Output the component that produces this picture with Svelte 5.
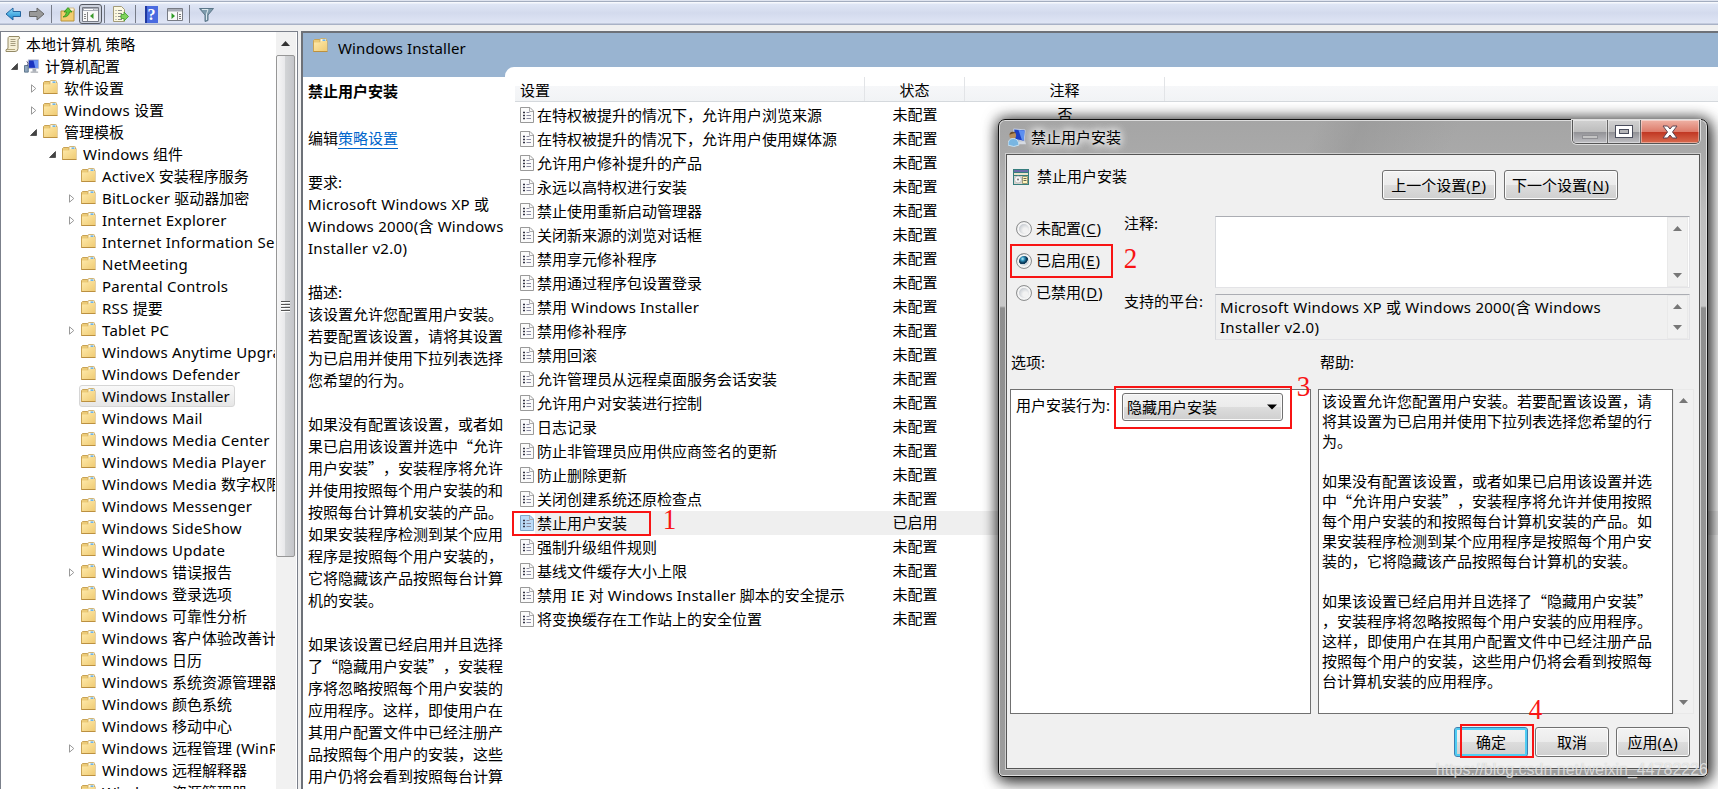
<script>
  const tree = [
    { depth: 0, label: '本地计算机 策略', icon: 'scroll' },
    { depth: 1, label: '计算机配置', icon: 'computer', open: true },
    { depth: 2, label: '软件设置', closed: true },
    { depth: 2, label: 'Windows 设置', closed: true },
    { depth: 2, label: '管理模板', open: true },
    { depth: 3, label: 'Windows 组件', open: true },
    { depth: 4, label: 'ActiveX 安装程序服务' },
    { depth: 4, label: 'BitLocker 驱动器加密', closed: true },
    { depth: 4, label: 'Internet Explorer', closed: true },
    { depth: 4, label: 'Internet Information Services' },
    { depth: 4, label: 'NetMeeting' },
    { depth: 4, label: 'Parental Controls' },
    { depth: 4, label: 'RSS 提要' },
    { depth: 4, label: 'Tablet PC', closed: true },
    { depth: 4, label: 'Windows Anytime Upgrade' },
    { depth: 4, label: 'Windows Defender' },
    { depth: 4, label: 'Windows Installer', selected: true },
    { depth: 4, label: 'Windows Mail' },
    { depth: 4, label: 'Windows Media Center' },
    { depth: 4, label: 'Windows Media Player' },
    { depth: 4, label: 'Windows Media 数字权限管理' },
    { depth: 4, label: 'Windows Messenger' },
    { depth: 4, label: 'Windows SideShow' },
    { depth: 4, label: 'Windows Update' },
    { depth: 4, label: 'Windows 错误报告', closed: true },
    { depth: 4, label: 'Windows 登录选项' },
    { depth: 4, label: 'Windows 可靠性分析' },
    { depth: 4, label: 'Windows 客户体验改善计划' },
    { depth: 4, label: 'Windows 日历' },
    { depth: 4, label: 'Windows 系统资源管理器' },
    { depth: 4, label: 'Windows 颜色系统' },
    { depth: 4, label: 'Windows 移动中心' },
    { depth: 4, label: 'Windows 远程管理 (WinRM)', closed: true },
    { depth: 4, label: 'Windows 远程解释器' },
    { depth: 4, label: 'Windows 资源管理器' },
  ];

  const settings = [
    { name: '在特权被提升的情况下，允许用户浏览来源', note: '否' },
    { name: '在特权被提升的情况下，允许用户使用媒体源' },
    { name: '允许用户修补提升的产品' },
    { name: '永远以高特权进行安装' },
    { name: '禁止使用重新启动管理器' },
    { name: '关闭新来源的浏览对话框' },
    { name: '禁用享元修补程序' },
    { name: '禁用通过程序包设置登录' },
    { name: '禁用 Windows Installer' },
    { name: '禁用修补程序' },
    { name: '禁用回滚' },
    { name: '允许管理员从远程桌面服务会话安装' },
    { name: '允许用户对安装进行控制' },
    { name: '日志记录' },
    { name: '防止非管理员应用供应商签名的更新' },
    { name: '防止删除更新' },
    { name: '关闭创建系统还原检查点' },
    { name: '禁止用户安装', state: '已启用', selected: true },
    { name: '强制升级组件规则' },
    { name: '基线文件缓存大小上限' },
    { name: '禁用 IE 对 Windows Installer 脚本的安全提示' },
    { name: '将变换缓存在工作站上的安全位置' },
  ];

  const requirement = ['要求:', 'Microsoft Windows XP 或', 'Windows 2000(含 Windows', 'Installer v2.0)'].join('\n');

  const description = [
    '描述:',
    '该设置允许您配置用户安装。',
    '若要配置该设置，请将其设置',
    '为已启用并使用下拉列表选择',
    '您希望的行为。',
    '',
    '如果没有配置该设置，或者如',
    '果已启用该设置并选中“允许',
    '用户安装”，安装程序将允许',
    '并使用按照每个用户安装的和',
    '按照每台计算机安装的产品。',
    '如果安装程序检测到某个应用',
    '程序是按照每个用户安装的，',
    '它将隐藏该产品按照每台计算',
    '机的安装。',
    '',
    '如果该设置已经启用并且选择',
    '了“隐藏用户安装”，安装程',
    '序将忽略按照每个用户安装的',
    '应用程序。这样，即使用户在',
    '其用户配置文件中已经注册产',
    '品按照每个用户的安装，这些',
    '用户仍将会看到按照每台计算',
  ].join('\n');

  const help = [
    '该设置允许您配置用户安装。若要配置该设置，请',
    '将其设置为已启用并使用下拉列表选择您希望的行',
    '为。',
    '',
    '如果没有配置该设置，或者如果已启用该设置并选',
    '中“允许用户安装”，安装程序将允许并使用按照',
    '每个用户安装的和按照每台计算机安装的产品。如',
    '果安装程序检测到某个应用程序是按照每个用户安',
    '装的，它将隐藏该产品按照每台计算机的安装。',
    '',
    '如果该设置已经启用并且选择了“隐藏用户安装”',
    '，安装程序将忽略按照每个用户安装的应用程序。',
    '这样，即使用户在其用户配置文件中已经注册产品',
    '按照每个用户的安装，这些用户仍将会看到按照每',
    '台计算机安装的应用程序。',
  ].join('\n');

  const radios = [
    { label: '未配置', key: 'C' },
    { label: '已启用', key: 'E' },
    { label: '已禁用', key: 'D' },
  ];
  let chosen = $state('E');

  // Latin runs are set slightly wider than the Chinese text around them
  const runs = (text) => text.split(/([\x20-\x7e]+)/).filter(Boolean);
  const isLatin = (run) => /^[\x20-\x7e]/.test(run);
</script>

<svelte:head>
  <title>本地组策略编辑器</title>
</svelte:head>

{#snippet mixed(text)}{#each runs(text) as run}{#if isLatin(run)}<span class="latin">{run}</span>{:else}{run}{/if}{/each}{/snippet}

{#snippet folder()}
  <svg class="folder" width="15" height="15" viewBox="0 0 15 15">
    <path d="M.5 13.5V2.500L1.500 1.500h5l1 1h6.500v11z" fill="#eccb78" stroke="#c9a355" />
    <rect x="7" y=".5" width="6.500" height="4" rx="1" fill="#fdf7df" stroke="#c9a355" stroke-width=".8" />
    <rect x="9.500" y="1.500" width="3" height="1.300" fill="#4ba3ea" />
    <path d="M1 4.500h6l1.500-1.500H14v10H1z" fill="url(#folder-face)" />
    <path d="M.5 13.500h14" stroke="#bb9040" />
  </svg>
{/snippet}

{#snippet users()}
  <svg width="19" height="19" viewBox="0 0 20 20">
    <path d="M6 1l12 1-1 12-10-2z" fill="#1c3fc4" stroke="#c9d4e4" />
    <path d="M11 2l6.500.5-.8 10.500-2-.2z" fill="#5c8ff0" />
    <path d="M11 14h7l1 3h-8z" fill="#d5dae2" />
    <circle cx="5" cy="8" r="3.500" fill="#b58c5a" />
    <path d="M1.500 7q1-5 7-2l-4 1z" fill="#6b4b2b" />
    <path d="M0 18q0-7 5.500-7t6 7q-5 3-11.500 0z" fill="#79b6e2" stroke="#c8e2f2" />
  </svg>
{/snippet}

{#snippet arrow(down)}
  <svg class="arrow" class:down width="9" height="5" viewBox="0 0 9 5"><path d="M0 5L4.500 0 9 5z" fill="#777" /></svg>
{/snippet}

<div class="app">
  <svg width="0" height="0" class="defs">
    <linearGradient id="folder-face" x1="0" y1="0" x2="1" y2="1">
      <stop offset="0" stop-color="#ffeaab" /><stop offset="1" stop-color="#efcb74" />
    </linearGradient>
    <linearGradient id="blue" x1="0" y1="0" x2="0" y2="1">
      <stop offset="0" stop-color="#8fe0fb" /><stop offset="1" stop-color="#1583cd" />
    </linearGradient>
  </svg>

  <div class="toolbar">
    <svg class="nav" width="17" height="14" viewBox="0 0 17 14">
      <path d="M1 7l7-6v3.500h7.500v5H8V13z" fill="url(#blue)" stroke="#24659f" />
    </svg>
    <svg class="nav" width="17" height="14" viewBox="0 0 17 14">
      <path d="M16 7L9 1v3.500H1.500v5H9V13z" fill="#999" stroke="#666" />
    </svg>
    <i class="sep"></i>
    <svg class="up" width="16" height="16" viewBox="0 0 16 16">
      <path d="M1 5h5l1-2h7v12H1z" fill="#f3cd71" stroke="#b8923b" />
      <path d="M9 2h5v3H9z" fill="#fff6da" stroke="#c09e52" stroke-width=".6" />
      <path d="M3 11q3-1 3.500-5H4L8 1.500 12 6H9.500Q9 11 3 11z" fill="#5cc53a" stroke="#24850f" stroke-width=".7" />
    </svg>
    <div class="pressed">
      <svg width="17" height="15" viewBox="0 0 17 15">
        <path d="M.5.5h16v14H.5z" fill="#f9f9f9" stroke="#777b84" />
        <path d="M1 1h15v3H1z" fill="#a9adb7" />
        <path d="M2 2.500h9M12.500 2.500h1M14.500 2.500h1" stroke="#fff" />
        <path d="M5.500 5v9" stroke="#888" />
        <path d="M2 7.500h2M2 9.500h2M2 11.500h2" stroke="#888" />
        <path d="M11.500 6v6L8 9z" fill="#3a9a2b" />
      </svg>
    </div>
    <i class="sep tight"></i>
    <svg class="export" width="17" height="16" viewBox="0 0 17 16">
      <path d="M.5.5h8l3 3v12H.5z" fill="#fcf9e2" stroke="#a39b78" />
      <path d="M2.500 4.500h1M5 4.500h4M2.500 7.500h1M5 7.500h4M2.500 10.500h1M5 10.500h3M2.500 13.500h1M5 13.500h4" stroke="#8a8a8a" />
      <path d="M8 8.500h3V6l4.500 4.500L11 15v-2.500H8z" fill="#7fd35c" stroke="#3e9a27" stroke-width=".8" />
    </svg>
    <i class="sep"></i>
    <div class="help-icon">?</div>
    <svg class="pane" width="16" height="13" viewBox="0 0 16 13">
      <path d="M.5.5h15v12H.5z" fill="#f9f9f9" stroke="#777b84" />
      <path d="M1 1h14v2.500H1z" fill="#a9adb7" />
      <path d="M10.500 4v8" stroke="#888" />
      <path d="M12 6.500h2M12 8.500h2M12 10.500h2" stroke="#777" />
      <path d="M4.500 5v6L8 8z" fill="#2d9c24" />
    </svg>
    <i class="sep"></i>
    <svg class="filter" width="15" height="15" viewBox="0 0 15 15">
      <path d="M.5 1.500h14L9 8v5.500l-3 1V8z" fill="#7d9bac" stroke="#5b7688" />
      <path d="M3 2.500h6L7.500 7v6" stroke="#dbe8ee" fill="none" />
    </svg>
  </div>

  <div class="body">
    <div class="tree-panel">
      <div class="tree">
        {#each tree as node}
          <div class="node" style="padding-left:{node.depth ? 19 * (node.depth - 1) + 4 : 4}px">
            {#if node.depth}
              <span class="twist">
                {#if node.open}
                  <svg width="7" height="7" viewBox="0 0 7 7"><path d="M6.500.5v6h-6z" fill="#444" stroke="#222" stroke-width=".6" /></svg>
                {:else if node.closed}
                  <svg class="shut" width="6" height="9" viewBox="0 0 6 9"><path d="M.5.8v7.400L4.800 4.500z" fill="#fff" stroke="#999" /></svg>
                {/if}
              </span>
            {/if}
            <span class="item" class:selected={node.selected}>
              {#if node.icon === 'scroll'}
                <svg width="16" height="16" viewBox="0 0 16 16">
                  <path d="M4 .5h10q2 2-1 3v9q0 3-3 3H1q-1-2 2-3V3q0-2 1-2.500z" fill="#f5efd6" stroke="#948a66" />
                  <path d="M5.500 3.500h5M5.500 5.500h5M5.500 7.500h5M5.500 9.500h5" stroke="#a59d80" />
                  <path d="M2 13.500h8" stroke="#b2a67c" />
                </svg>
              {:else if node.icon === 'computer'}
                <svg width="16" height="16" viewBox="0 0 17 16">
                  <path d="M4.500 1.500h11v9h-11z" fill="#1a33c0" stroke="#c3c8d0" />
                  <path d="M10 2h5v8h-3z" fill="#6b94f4" />
                  <path d="M9 11h4v3H9z" fill="#a9afb8" /><path d="M7 14h8v1H7z" fill="#8b9099" />
                  <path d="M.5 7.500h4v7h-4z" fill="#8fa6bd" stroke="#5b7389" />
                  <path d="M3 3q3 3 0 5" stroke="#557" fill="none" />
                </svg>
              {:else}
                {@render folder()}
              {/if}
              <span class="label">{@render mixed(node.label)}</span>
            </span>
          </div>
        {/each}
      </div>
      <div class="scrollbar">
        <div class="scroll-up"><svg width="9" height="5" viewBox="0 0 9 5"><path d="M0 5L4.500 0 9 5z" fill="#333" /></svg></div>
        <div class="thumb"><i></i><i></i><i></i><i></i></div>
      </div>
    </div>

    <div class="main">
      <div class="banner">{@render folder()}<span class="path">{@render mixed('Windows Installer')}</span></div>
      <div class="columns">
        <div class="detail">
          <b>禁止用户安装</b>
          <div class="edit">编辑<a href="#policy">策略设置</a></div>
          <div class="para req">{@render mixed(requirement)}</div>
          <div class="para cjk">{description}</div>
        </div>
        <div class="list">
          <div class="head">
            <span class="name">设置</span><span class="state">状态</span><span class="note">注释</span>
          </div>
          {#each settings as row}
            <div class="row" class:selected={row.selected}>
              <span class="name">
                <svg width="14" height="16" viewBox="0 0 14 16">
                  <path d="M.5.5h9.500l3.500 3.500v11.500H.5z" fill={row.selected ? '#bcdcf8' : '#fbfbfb'} stroke={row.selected ? '#7ea6c8' : '#999'} />
                  <path d="M9.500 1v3.500H13" fill="none" stroke="#aaa" />
                  <path d="M3 5.500h2M3 8.500h2M3 11.500h2" stroke="#334" stroke-width="1.600" />
                  <path d="M6.500 5.500h3M6.500 8.500h4.500M6.500 11.500h4.500" stroke="#8a8aa0" />
                </svg>
                <span class="title">{@render mixed(row.name)}</span>
              </span>
              <span class="state">{row.state ?? '未配置'}</span>
              <span class="note">{row.note ?? ''}</span>
            </div>
          {/each}
        </div>
      </div>
    </div>
  </div>

  <div class="dialog">
    <div class="titlebar">
      {@render users()}
      <span class="caption">禁止用户安装</span>
      <div class="controls">
        <span class="min"><i></i></span>
        <span class="max"><i></i></span>
        <span class="close">
          <svg width="16" height="14" viewBox="0 0 16 14">
            <path d="M1 1h4.500L8 4l2.500-3H15l-4.500 6 4.500 6h-4.500L8 10l-2.500 3H1l4.500-6z" fill="#fff" stroke="#5b4350" />
          </svg>
        </span>
      </div>
    </div>
    <div class="client">
      <div class="heading">
        <svg width="16" height="16" viewBox="0 0 16 16">
          <path d="M0 0h16v16H0z" fill="#367d7d" />
          <path d="M1 1h14v2H1z" fill="#6a6aa8" /><path d="M1 4h14v2H1z" fill="#e8e4c8" />
          <path d="M1 7h14v8H1z" fill="#d8d5ce" />
          <circle cx="5" cy="10.500" r="3.500" fill="#f4f4f4" stroke="#aaa" stroke-width=".6" /><circle cx="5" cy="10.500" r="1" fill="#777" />
          <path d="M9.500 7.500h5v7h-5z" fill="#fff5b8" stroke="#997" /><path d="M10.500 9.500h3M10.500 11.500h3" stroke="#665" />
        </svg>
        <span class="what">禁止用户安装</span>
        <button class="wide">上一个设置<span class="key">(<u>P</u>)</span></button>
        <button class="wide">下一个设置<span class="key">(<u>N</u>)</span></button>
      </div>

      <div class="form">
        <div class="radios">
          {#each radios as r}
            <label>
              <input type="radio" name="state" value={r.key} bind:group={chosen} />
              <span>{r.label}<span class="key">(<u>{r.key}</u>)</span></span>
            </label>
          {/each}
        </div>
        <div class="labels"><span>注释:</span><span class="second">支持的平台:</span></div>
        <div class="fields">
          <div class="field comment">
            <div class="text"></div>
            <div class="bar">{@render arrow(false)}{@render arrow(true)}</div>
          </div>
          <div class="field platform">
            <div class="text req">{@render mixed('Microsoft Windows XP 或 Windows 2000(含 Windows\nInstaller v2.0)')}</div>
            <div class="bar">{@render arrow(false)}{@render arrow(true)}</div>
          </div>
        </div>
      </div>

      <div class="captions"><span>选项:</span><span>帮助:</span></div>
      <div class="boxes">
        <div class="options">
          <span>用户安装行为:</span>
          <div class="select">
            <span>隐藏用户安装</span>
            <svg width="10" height="6" viewBox="0 0 10 6"><path d="M0 .5h10L5 5.500z" /></svg>
          </div>
        </div>
        <div class="help">{help}</div>
        <div class="bar">{@render arrow(false)}{@render arrow(true)}</div>
      </div>

      <div class="footer">
        <button class="default">确定</button>
        <button>取消</button>
        <button>应用<span class="key">(<u>A</u>)</span></button>
      </div>
    </div>
  </div>

  <!-- Step markers -->
  <div class="mark m1"></div><div class="digit d1">1</div>
  <div class="mark m2"></div><div class="digit d2">2</div>
  <div class="mark m3"></div><div class="digit d3">3</div>
  <div class="mark m4"></div><div class="digit d4">4</div>
  <div class="watermark">https://blog.csdn.net/weixin_44782226</div>
</div>

<style>
  :global(body) { margin: 0; overflow: hidden; }
  * { box-sizing: border-box; }
  .app {
    position: relative;
    width: 1718px;
    height: 789px;
    overflow: hidden;
    display: flex;
    flex-direction: column;
    background: #f0f0f0;
    color: #000;
    font: 15px/22px 'Noto Sans', 'Noto Sans CJK SC', sans-serif;
    text-spacing-trim: space-all;
  }
  .defs { position: absolute; }
  svg { display: block; flex-shrink: 0; }
  .latin { letter-spacing: 0.25px; }
  .title .latin, .selected .latin, .path .latin { letter-spacing: 0.13px; }
  .req .latin { letter-spacing: 0.28px; }
  .key { letter-spacing: 0.8px; }

  /* Toolbar */
  .toolbar {
    height: 25px;
    flex-shrink: 0;
    display: flex;
    align-items: center;
    padding: 3px 0 0 5px;
    background: linear-gradient(#dfe4ef 0 1px, #a3adbf 1px 2px, #f7f9fd 2px 3px, #dfe6f5 4px, #d3daed 13px, #dfe5f5 23px, #a9b2c6 24px);
  }
  .nav { margin-right: 6px; }
  .sep { width: 1px; height: 18px; background: #777c88; }
  .sep.tight { margin-left: 2px; }
  .up { margin: 0 3px 0 8px; }
  .pressed {
    width: 23px;
    height: 20px;
    display: flex;
    align-items: center;
    justify-content: center;
    border: 1.5px solid #555962;
    border-radius: 3px;
    background: #cdd2de;
  }
  .export { margin: 0 5px 0 8px; }
  .help-icon {
    width: 13px;
    height: 17px;
    margin: 0 9px;
    background: linear-gradient(90deg, #2039a0 2px, #4a6be0 2px);
    color: #fff;
    font: bold 16px/17px 'Liberation Serif', serif;
    text-align: center;
  }
  .pane { margin-right: 6px; }
  .filter { margin-left: 9px; }

  .body { flex: 1; display: flex; padding-top: 6px; min-height: 0; }

  /* Tree */
  .tree-panel {
    width: 298px;
    display: flex;
    border: 1px solid #7b808b;
    border-bottom: 0;
    background: #fff;
    overflow: hidden;
  }
  .tree { width: 274px; margin-right: 1px; padding-top: 1px; overflow: hidden; }
  .node { display: flex; height: 22px; white-space: nowrap; }
  .twist { width: 19px; flex-shrink: 0; padding: 8px 0 0 6px; }
  .shut { margin: -1px 0 0 1px; }
  .item {
    display: flex;
    align-items: flex-start;
    height: 22px;
    margin-left: -2px;
    padding: 2px 4px 0 1px;
    border: 1px solid transparent;
    border-radius: 3px;
  }
  .item.selected { background: linear-gradient(#f9f9f9, #e6e6e6); border-color: #d6d6d6; }
  .label { line-height: 20px; margin: -2px 0 0 6px; }
  .item svg:not(.folder) + .label { margin-left: 5px; }
  .scrollbar { width: 20px; background: #f1f1f1; }
  .scroll-up { height: 23px; padding: 9px 0 0 5px; }
  .thumb {
    width: 19px;
    height: 502px;
    display: flex;
    flex-direction: column;
    justify-content: center;
    align-items: center;
    gap: 2px;
    border: 1px solid #979797;
    border-radius: 2px;
    background: linear-gradient(90deg, #f6f6f6, #e9e9eb 45%, #d2d4d6 50%, #c4c5c9);
  }
  .thumb i { width: 9px; height: 1px; background: #555; box-shadow: 0 1px #fff; }

  /* Right hand side */
  .main {
    flex: 1;
    margin-left: 3px;
    border: 2px solid #6d7178;
    border-right: 0;
    border-bottom: 0;
    background: #99b4d1;
    display: flex;
    flex-direction: column;
    min-width: 0;
  }
  .banner { height: 34px; display: flex; padding: 5px 0 0 10px; }
  .path { margin: -1px 0 0 10px; line-height: 22px; }
  .columns { display: flex; flex: 1; min-height: 0; }
  .detail { width: 202px; margin-top: 10px; padding: 3px 0 0 5px; background: #fff; overflow: hidden; }
  .detail b { display: block; font-weight: 700; }
  .edit { margin: 25px 0 22px; height: 22px; }
  .edit a { color: #0066cc; text-decoration: none; border-bottom: 1px solid #0066cc; }
  .para { white-space: pre; margin-bottom: 22px; }
  .cjk, .help { font-family: 'Noto Sans CJK SC', sans-serif; }
  .list { flex: 1; padding-top: 10px; background: #fff; border-top-left-radius: 9px; }
  .head {
    display: flex;
    height: 25px;
    margin-left: 10px;
    line-height: 27px;
    border-bottom: 1px solid #d5d9dd;
    background: linear-gradient(#fff 9px, #f6f7f9 9px, #f1f3f5);
  }
  .head .name { width: 350px; padding-left: 5px; border-right: 1px solid #e2e4e7; }
  .head .state, .head .note { border-right: 1px solid #e2e4e7; }
  .state { width: 100px; text-align: center; }
  .note { width: 200px; text-align: center; }
  .row { display: flex; height: 24px; margin-left: 10px; line-height: 23px; }
  .head + .row { margin-top: 1px; }
  .row .name { width: 350px; display: flex; align-items: center; padding-left: 5px; }
  .row .title { margin-left: 3px; white-space: nowrap; }
  .row.selected { background: linear-gradient(90deg, #fff 20px, #efefef 20px); }

  /* Policy dialog */
  .dialog {
    position: absolute;
    left: 998px;
    top: 119px;
    width: 710px;
    height: 658px;
    padding: 0 7px 8px 7px;
    border: 1px solid #111;
    border-radius: 7px 7px 5px 5px;
    background:
      linear-gradient(115deg, transparent 290px, #8f8f8f66 330px, transparent 420px) 0 0 / 100% 34px no-repeat,
      linear-gradient(#a5a5a5 0, #a9a9a9 34px, #bdbdbd 90px, #c8c8c8 186px, #8e8e8e 188px, #9d9d9d);
    box-shadow: inset 0 0 0 1px #ddd, 0 0 14px 2px #0009, 3px 5px 16px #0009;
  }
  .titlebar { height: 34px; display: flex; align-items: flex-start; padding: 8px 0 0 2px; }
  .caption { margin: -2px 0 0 4px; text-shadow: 0 0 8px #fff, 0 0 8px #fff, 0 0 12px #fff; }
  .controls {
    display: flex;
    margin: -8px 0 0 auto;
    height: 24px;
    border: 1px solid #555;
    border-top: 0;
    border-radius: 0 0 5px 5px;
    box-shadow: 0 0 0 1px #ddd;
    overflow: hidden;
  }
  .controls span {
    display: flex;
    align-items: center;
    justify-content: center;
    border-right: 1px solid #666;
    background: linear-gradient(#d2d2d2, #bdbdbd 50%, #8f8f93 50%, #bfbfc3);
    box-shadow: inset 0 0 0 1px #ffffff66;
  }
  .min { width: 35px; padding-top: 10px; }
  .min i { width: 16px; height: 4px; background: #c4c4c4; border: 1px solid #909094; }
  .max { width: 33px; }
  .max i { width: 18px; height: 13px; border: 1px solid #4a4d5c; background: #fff; display: flex; }
  .max i::after { content: ''; margin: 3px; flex: 1; border: 1px solid #4a4d5c; background: #b5b5b8; }
  .controls .close { width: 58px; border: 0; background: linear-gradient(#efb2a5, #dd7c6b 50%, #bf3420 50%, #d96a4e); }
  .client {
    height: 615px;
    display: flex;
    flex-direction: column;
    border: 1px solid #555;
    box-shadow: 0 0 0 1px #d0d0d0;
    background: #f0f0f0;
  }
  .heading { display: flex; align-items: flex-start; height: 61px; padding: 14px 81px 0 6px; }
  .what { flex: 1; margin: -4px 0 0 8px; }
  button {
    width: 74px;
    height: 30px;
    padding: 0;
    border: 1px solid #707070;
    border-radius: 3px;
    background: linear-gradient(#f3f3f3, #ebebeb 50%, #dddddd 50%, #cfcfcf);
    box-shadow: inset 0 0 0 1px #fcfcfc;
    color: #000;
    font: inherit;
    line-height: 26px;
    white-space: nowrap;
  }
  button.wide { width: 114px; margin: 1px 0 0 8px; line-height: 25px; }
  u { text-underline-offset: 2px; }
  .form { display: flex; height: 125px; }
  .radios { width: 117px; padding: 1px 0 0 9px; }
  .radios label { display: flex; align-items: center; height: 32px; }
  .radios label > span { margin-top: -2px; }
  .radios label:first-child { height: 24px; margin-bottom: 4px; }
  input {
    appearance: none;
    width: 16px;
    height: 16px;
    margin: 0 4px 0 0;
    border: 1px solid #8e8f8f;
    border-radius: 50%;
    background: radial-gradient(circle at 60% 60%, #f2f2f2 20%, #c5cad0 60%);
    box-shadow: inset 0 0 0 2px #f4f4f4;
  }
  input:checked { background: radial-gradient(circle at 40% 35%, #b8ecfb 0, #2e8fb8 2px, #0c3b5c 4px, #0c3b5c 5px, #d5dade 5.5px); }
  .labels { width: 91px; display: flex; flex-direction: column; white-space: nowrap; }
  .labels span { margin-top: -4px; }
  .labels .second { margin-top: 56px; }
  .fields { flex: 1; padding-right: 9px; }
  .field { display: flex; border: 1px solid #e3e3e6; border-top-color: #abadb3; border-left-color: #d8dade; }
  .comment { height: 72px; background: #fff; }
  .platform { height: 46px; margin-top: 6px; }
  .text { flex: 1; padding: 2px 4px; line-height: 20px; white-space: pre; }
  .bar {
    width: 21px;
    display: flex;
    flex-direction: column;
    justify-content: space-between;
    align-items: center;
    padding: 8px 0;
    background: #f1f1f1;
    border: 1px solid #e9e9e9;
  }
  .field .bar { margin-right: 1px; }
  .arrow.down { transform: rotate(180deg); }
  .captions { display: flex; height: 48px; padding: 10px 0 0 4px; }
  .captions span { width: 309px; }
  .boxes { display: flex; height: 325px; padding-left: 3px; }
  .options { width: 301px; display: flex; padding: 3px 0 0 5px; border: 1px solid #707070; background: #fff; white-space: nowrap; line-height: 24px; }
  .select {
    width: 161px;
    height: 28px;
    display: flex;
    align-items: center;
    justify-content: space-between;
    margin-left: 12px;
    padding: 0 5px 0 4px;
    border: 1px solid #707070;
    border-radius: 3px;
    background: linear-gradient(#f2f2f2, #ebebeb 50%, #dddddd 50%, #cfcfcf);
    box-shadow: inset 0 0 0 1px #fafafa;
  }
  .help { width: 355px; margin-left: 7px; padding: 1px 3px; border: 1px solid #707070; background: #fff; white-space: pre; line-height: 20px; }
  .footer { display: flex; justify-content: flex-end; gap: 7px; padding: 13px 9px 0 0; }
  button.default { border-color: #3c7fb1; box-shadow: inset 0 0 0 2px #4fcdf3; }

  /* Step markers over the windows */
  .mark { position: absolute; border: 2px solid #f81414; }
  .m1 { left: 512px; top: 511px; width: 139px; height: 25px; }
  .m2 { left: 1010px; top: 244px; width: 103px; height: 34px; }
  .m3 { left: 1114px; top: 386px; width: 178px; height: 43px; }
  .m4 { left: 1460px; top: 724px; width: 74px; height: 34px; }
  .digit { position: absolute; color: #f81414; font: 30px/30px 'Liberation Serif', serif; transform: scaleX(0.9); }
  .d1 { left: 662px; top: 504px; }
  .d2 { left: 1123px; top: 243px; }
  .d3 { left: 1296px; top: 371px; }
  .d4 { left: 1528px; top: 694px; }
  .watermark {
    position: absolute;
    right: 10px;
    top: 759px;
    color: #ffffffa6;
    font: 16px/22px 'Liberation Sans', sans-serif;
    text-shadow: 0 0 1px #8888;
  }
</style>
